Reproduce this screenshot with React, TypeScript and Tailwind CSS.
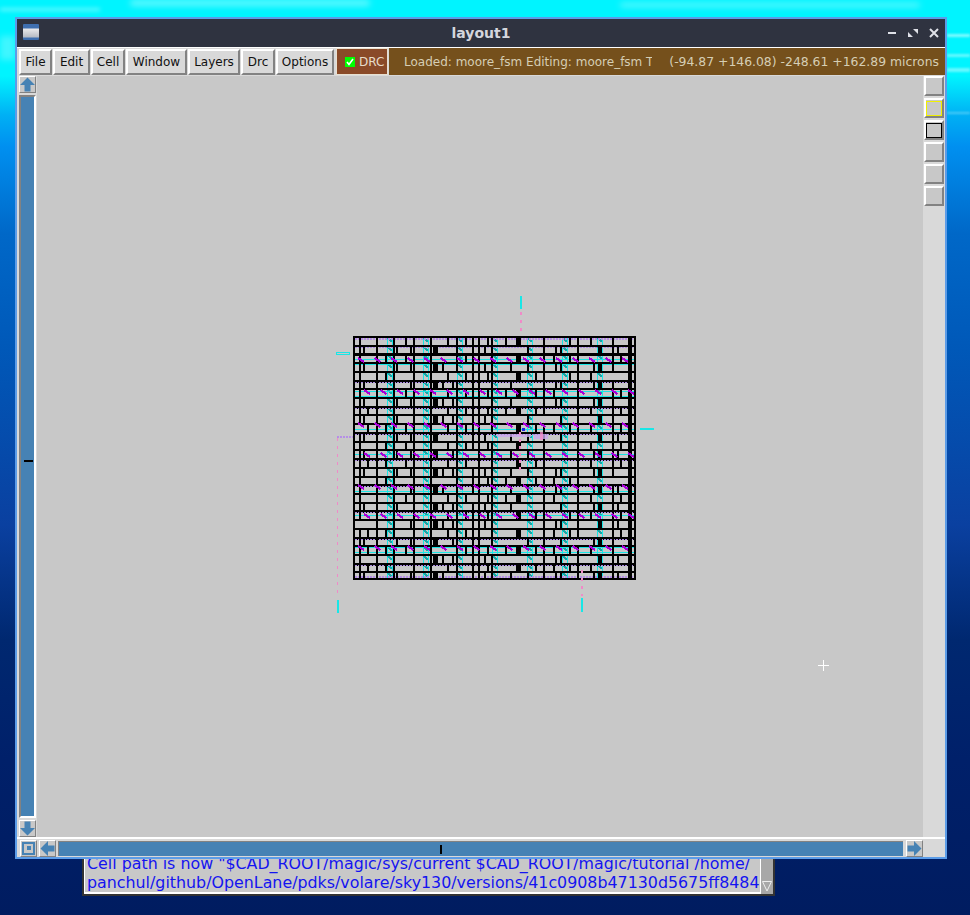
const menus = [
  { label: "File", width: "w-[33px]" },
  { label: "Edit", width: "w-[37px]" },
  { label: "Cell", width: "w-[34px]" },
  { label: "Window", width: "w-[61px]" },
  { label: "Layers", width: "w-[52px]" },
  { label: "Drc", width: "w-[34px]" },
  { label: "Options", width: "w-[58px]" },
];

const raised = "border-t-white border-l-white border-r-[#828282] border-b-[#828282]";

// cheap repeatable noise so the chip looks the same on every load
const noise = (a: number, b: number) => Math.abs(Math.sin(a * 12.9898 + b * 78.233) * 43758.5453) % 1;

const ROW = 8.72;
const rows = Array.from({ length: 28 }, (_, i) => Math.round(336 + i * ROW));
const fixedCols = [359, 376, 393, 413, 430, 456, 472, 478, 491, 543, 577, 612];
const evenCols = [367, 385, 405, 447, 465, 487, 505, 535, 553, 569, 590, 620];
const oddCols = [363, 396, 410, 442, 452, 484, 510, 527, 555, 560, 593, 617];
const cyanCols = [387, 423, 457, 492, 527, 562, 597];
const magentaRows = [358, 390, 423, 453, 485, 514, 546];
const lilacRows = [1, 5, 8, 11, 14, 17, 20, 23, 26];

function Chip() {
  return (
    <svg className="absolute left-[-37px] top-[-76px] pointer-events-none" width="970" height="915" shapeRendering="crispEdges">
      {/* vertical cyan straps with teal jogs */}
      {cyanCols.map((x) => (
        <g key={x}>
          <line x1={x} x2={x} y1="337" y2="579" stroke="#19e6e6" />
          <line x1={x + 5} x2={x + 5} y1="337" y2="579" stroke="#19e6e6" />
          {rows.map((y) => (
            <path key={y} d={`M${x + 1} ${y + 2}l4 4`} stroke="#17a6a6" strokeWidth="2" fill="none" />
          ))}
        </g>
      ))}

      {/* horizontal cyan straps */}
      {magentaRows.map((y) => (
        <g key={y}>
          <line x1="355" x2="634" y1={y + 1} y2={y + 1} stroke="#19e6e6" />
          <line x1="355" x2="634" y1={y + 6} y2={y + 6} stroke="#19e6e6" />
        </g>
      ))}

      {/* black rows */}
      {rows.map((y, i) => (
        <rect key={y} x="353" y={y} width="283" height={i % 3 === 2 ? 3 : 2} fill="#000" />
      ))}

      {/* lilac dotted metal */}
      <line x1="355" x2="634" y1="339" y2="339" stroke="#b58fe6" strokeWidth="2" strokeDasharray="2 1" />
      <line x1="355" x2="634" y1="577" y2="577" stroke="#b58fe6" strokeWidth="2" strokeDasharray="2 1" />
      {lilacRows.map((i) => (
        <line key={i} x1="355" x2="634" y1={rows[i] + 2.5} y2={rows[i] + 2.5} stroke="#a98ae0" strokeDasharray="2 1" />
      ))}

      {/* black cell outlines */}
      {rows.map((y, i) => (
        <g key={y}>
          {fixedCols.map((x) =>
            noise(x, i) > 0.06 ? <rect key={x} x={x} y={y} width="2" height="9" fill="#000" /> : null,
          )}
          {(i % 2 === 0 ? evenCols : oddCols).map((x) =>
            noise(i, x) > 0.35 ? <rect key={x} x={x} y={y} width="2" height="9" fill="#000" /> : null,
          )}
          {i % 2 === 1 && <rect x="433" y={y} width="5" height="9" fill="#000" />}
          {i % 2 === 0 && <rect x="516" y={y} width="5" height="9" fill="#000" />}
          {i % 2 === 1 && <rect x="598" y={y} width="4" height="9" fill="#000" />}
        </g>
      ))}
      <rect x="353" y="578" width="283" height="2" fill="#000" />
      <rect x="353" y="336" width="2" height="244" fill="#000" />
      <rect x="634" y="336" width="2" height="244" fill="#000" />
      <rect x="628" y="336" width="4" height="244" fill="#000" />

      {/* magenta poly jogs */}
      {magentaRows.map((y, i) => (
        <g key={y}>
          {Array.from({ length: 17 }, (_, j) => (
            <path key={j} d={`M${358 + j * 16.5 + (i % 2) * 6} ${y}l6 4`} stroke="#a800d8" strokeWidth="2" fill="none" />
          ))}
        </g>
      ))}

      {/* the busy routed patch in the middle */}
      <rect x="497" y="434" width="34" height="3" fill="#c9a7ee" opacity="0.8" />
      <rect x="534" y="434" width="14" height="5" fill="#c9a7ee" opacity="0.8" />
      <line x1="520" x2="520" y1="432" y2="470" stroke="#f08ac8" strokeWidth="2" strokeDasharray="3 4" />
      <rect x="540" y="432" width="3" height="8" fill="#f08ac8" opacity="0.8" />
      <rect x="522" y="428" width="3" height="3" fill="#2020e0" />

      {/* pins */}
      <rect x="336.5" y="352.5" width="13" height="2" fill="none" stroke="#19e6e6" />
      <rect x="520" y="296" width="2" height="13" fill="#19e6e6" />
      <line x1="521" x2="521" y1="312" y2="336" stroke="#f08ac8" strokeWidth="2" strokeDasharray="3 5" />
      <rect x="640" y="428" width="14" height="2" fill="#19e6e6" />
      <line x1="337" x2="353" y1="437" y2="437" stroke="#b58fe6" strokeWidth="2" strokeDasharray="2 1" />
      <line x1="337.5" x2="337.5" y1="438" y2="598" stroke="#f08ac8" strokeDasharray="3 5" />
      <rect x="337" y="600" width="2" height="13" fill="#19e6e6" />
      <rect x="581" y="598" width="2" height="14" fill="#19e6e6" />
      <line x1="581.5" x2="581.5" y1="570" y2="596" stroke="#f08ac8" strokeWidth="2" strokeDasharray="3 5" />

      {/* crosshair */}
      <path d="M823 660v11M818 665.5h11" stroke="#fff" fill="none" />
    </svg>
  );
}

function ScrollButton({ turn }: { turn: string }) {
  return (
    <div className={`flex h-[17px] w-[17px] items-center justify-center border bg-[#c8c8c8] ${raised}`}>
      <svg className={turn} width="15" height="15" viewBox="0 0 15 15">
        <path d="M7.5 0.5L15 8h-4.5v6.5h-6V8H0z" fill="#4682b4" />
      </svg>
    </div>
  );
}

function LayerButton({ outline }: { outline?: string }) {
  return (
    <div className={`flex h-[20px] w-[20px] items-center justify-center border-2 bg-[#c8c8c8] ${raised}`}>
      {outline && <div className={`h-[15px] w-[16px] border ${outline}`} />}
    </div>
  );
}

export default function App() {
  return (
    <div className="relative h-[915px] w-[970px] overflow-hidden bg-[linear-gradient(180deg,#00f4ff_0px,#00f4ff_76px,#00b0f4_115px,#0090f0_146px,#0068c8_233px,#0058b8_350px,#0a40a0_525px,#002870_640px,#00206a_760px,#001c60_915px)] font-['DejaVu_Sans',sans-serif]">
      {/* wallpaper streaks along the top */}
      <div className="absolute left-[130px] top-0 h-[6px] w-[240px] rounded-full bg-white/40 blur-[3px]" />
      <div className="absolute left-[620px] top-[3px] h-[4px] w-[300px] rounded-full bg-white/40 blur-[3px]" />
      <div className="absolute left-0 top-[8px] h-[3px] w-[100px] bg-white/40 blur-[2px]" />
      <div className="absolute left-0 top-[36px] h-[24px] w-[15px] bg-white/25 blur-[3px]" />
      <div className="absolute right-0 top-[34px] h-[3px] w-[23px] bg-white/50 blur-[1px]" />
      <div className="absolute right-0 top-[54px] h-[3px] w-[23px] bg-white/40 blur-[1px]" />
      <div className="absolute right-0 top-[68px] h-[4px] w-[23px] bg-white/40 blur-[1px]" />
      <div className="absolute right-0 top-[112px] h-[2px] w-[23px] bg-white/30 blur-[1px]" />

      {/* terminal peeking out under the layout window */}
      <div className="absolute left-[82px] top-[845px] flex h-[51px] w-[693px] border-2 border-t-0 border-[#333] bg-white">
        <div className="mb-[2px] ml-[1px] flex-1 overflow-hidden bg-[#c8c8c8] pt-[9px] pl-[2px] text-[15.85px] leading-[19px] whitespace-nowrap text-[#1414f0]">
          <div>Cell path is now "$CAD_ROOT/magic/sys/current $CAD_ROOT/magic/tutorial /home/</div>
          <div>panchul/github/OpenLane/pdks/volare/sky130/versions/41c0908b47130d5675ff8484</div>
        </div>
        <div className="ml-[1px] flex w-[12px] shrink-0 flex-col justify-end bg-[#a8a8a8] pb-[2px]">
          <svg width="12" height="12" viewBox="0 0 12 12">
            <path d="M1.5 1.5h9L6 11z" fill="#a8a8a8" stroke="#eee" />
          </svg>
        </div>
      </div>

      {/* layout window */}
      <div className="absolute left-[15px] top-[17px] flex h-[842px] w-[932px] flex-col border-2 border-[#5b9ce8] bg-[#d9d9d9]">
        <div className="relative flex h-[28px] shrink-0 items-center justify-center bg-[#2f3340]">
          <div className="absolute left-[6px] top-[5px] h-[16px] w-[16px] rounded-[1px] bg-[linear-gradient(180deg,#3f6fb0_0,#3f6fb0_4px,#e8e8ea_5px,#b8bcc4_13px,#3f6fb0_14px)]" />
          <span className="text-[14px] font-bold text-[#d5d7de]">layout1</span>
          <div className="absolute right-[6px] top-0 flex h-full items-center gap-[11px]">
            <svg width="10" height="10" viewBox="0 0 10 10">
              <path d="M1 5h8" stroke="#dfe1e8" strokeWidth="2" />
            </svg>
            <svg width="10" height="10" viewBox="0 0 10 10">
              <path d="M5 1h5v5zM0 4l5 5H0z" fill="#dfe1e8" />
            </svg>
            <svg width="10" height="10" viewBox="0 0 10 10">
              <path d="M1 1l8 8M9 1l-8 8" stroke="#dfe1e8" strokeWidth="2" />
            </svg>
          </div>
        </div>

        {/* menu row */}
        <div className="flex h-[28px] shrink-0 items-center gap-[1px] border-t border-white bg-[#d9d9d9] pl-[2px] text-[12px] text-[#111]">
          {menus.map((m) => (
            <div key={m.label} className={`flex h-[26px] items-center justify-center border-2 bg-[#d9d9d9] pt-[1px] ${m.width} ${raised}`}>
              {m.label}
            </div>
          ))}
          <div className="ml-[1px] flex h-[27px] w-[52px] items-center gap-[4px] border border-[#e8e0d0] bg-[#8a4a28] pt-[1px] pl-[8px] text-[#e8dcc8]">
            <span className="flex h-[10px] w-[10px] items-center justify-center bg-[#00ff00]">
              <svg width="8" height="8" viewBox="0 0 8 8">
                <path d="M1 4l2 2.5L7 1" stroke="#fff" strokeWidth="1.6" fill="none" />
              </svg>
            </span>
            DRC
          </div>
          <div className="flex h-[27px] flex-1 items-center justify-between overflow-hidden bg-[#75501c] pt-[1px] pr-[6px] pl-[15px] text-[#d6ceb4]">
            <span className="w-[248px] overflow-hidden whitespace-nowrap">Loaded: moore_fsm Editing: moore_fsm T</span>
            <span className="text-[12.4px] whitespace-nowrap">(-94.87 +146.08) -248.61 +162.89 microns</span>
          </div>
        </div>

        <div className="flex min-h-0 flex-1">
          {/* vertical scrollbar */}
          <div className="flex w-[20px] shrink-0 flex-col items-center gap-[2px] bg-[#d9d9d9] pt-[1px] pl-[1px]">
            <ScrollButton turn="" />
            <div className="relative w-[17px] flex-1 border-2 border-t-[#828282] border-r-white border-b-white border-l-[#828282] bg-[#4682b4]">
              <div className="absolute top-[363px] left-[3px] h-[2px] w-[9px] bg-black" />
            </div>
            <ScrollButton turn="rotate-180" />
          </div>

          {/* layout canvas */}
          <div className="relative flex-1 border-t border-[#d9d9d9] bg-[#c8c8c8]">
            <Chip />
          </div>

          {/* layer buttons */}
          <div className="flex w-[22px] shrink-0 flex-col gap-[2px] pt-[1px] pl-[1px]">
            <LayerButton />
            <LayerButton outline="border-[#f0f000]" />
            <LayerButton outline="border-black" />
            <LayerButton />
            <LayerButton />
            <LayerButton />
          </div>
        </div>

        {/* horizontal scrollbar */}
        <div className="flex h-[20px] shrink-0 items-center gap-[1px] border-t-2 border-white pl-[3px]">
          <div className={`flex h-[17px] w-[17px] items-center justify-center border bg-[#c8c8c8] ${raised}`}>
            <div className="flex h-[13px] w-[13px] items-center justify-center bg-[#4682b4]">
              <div className="flex h-[9px] w-[9px] items-center justify-center bg-[#c8c8c8]">
                <div className="h-[4px] w-[4px] bg-[#4682b4]" />
              </div>
            </div>
          </div>
          <div className="ml-[1px]">
            <ScrollButton turn="-rotate-90" />
          </div>
          <div className="relative ml-[1px] h-[15px] w-[845px] border-t border-l border-[#828282] bg-[#4682b4]">
            <div className="absolute top-[3px] left-[381px] h-[9px] w-[2px] bg-black" />
          </div>
          <div className="ml-[2px]">
            <ScrollButton turn="rotate-90" />
          </div>
        </div>
      </div>
    </div>
  );
}
